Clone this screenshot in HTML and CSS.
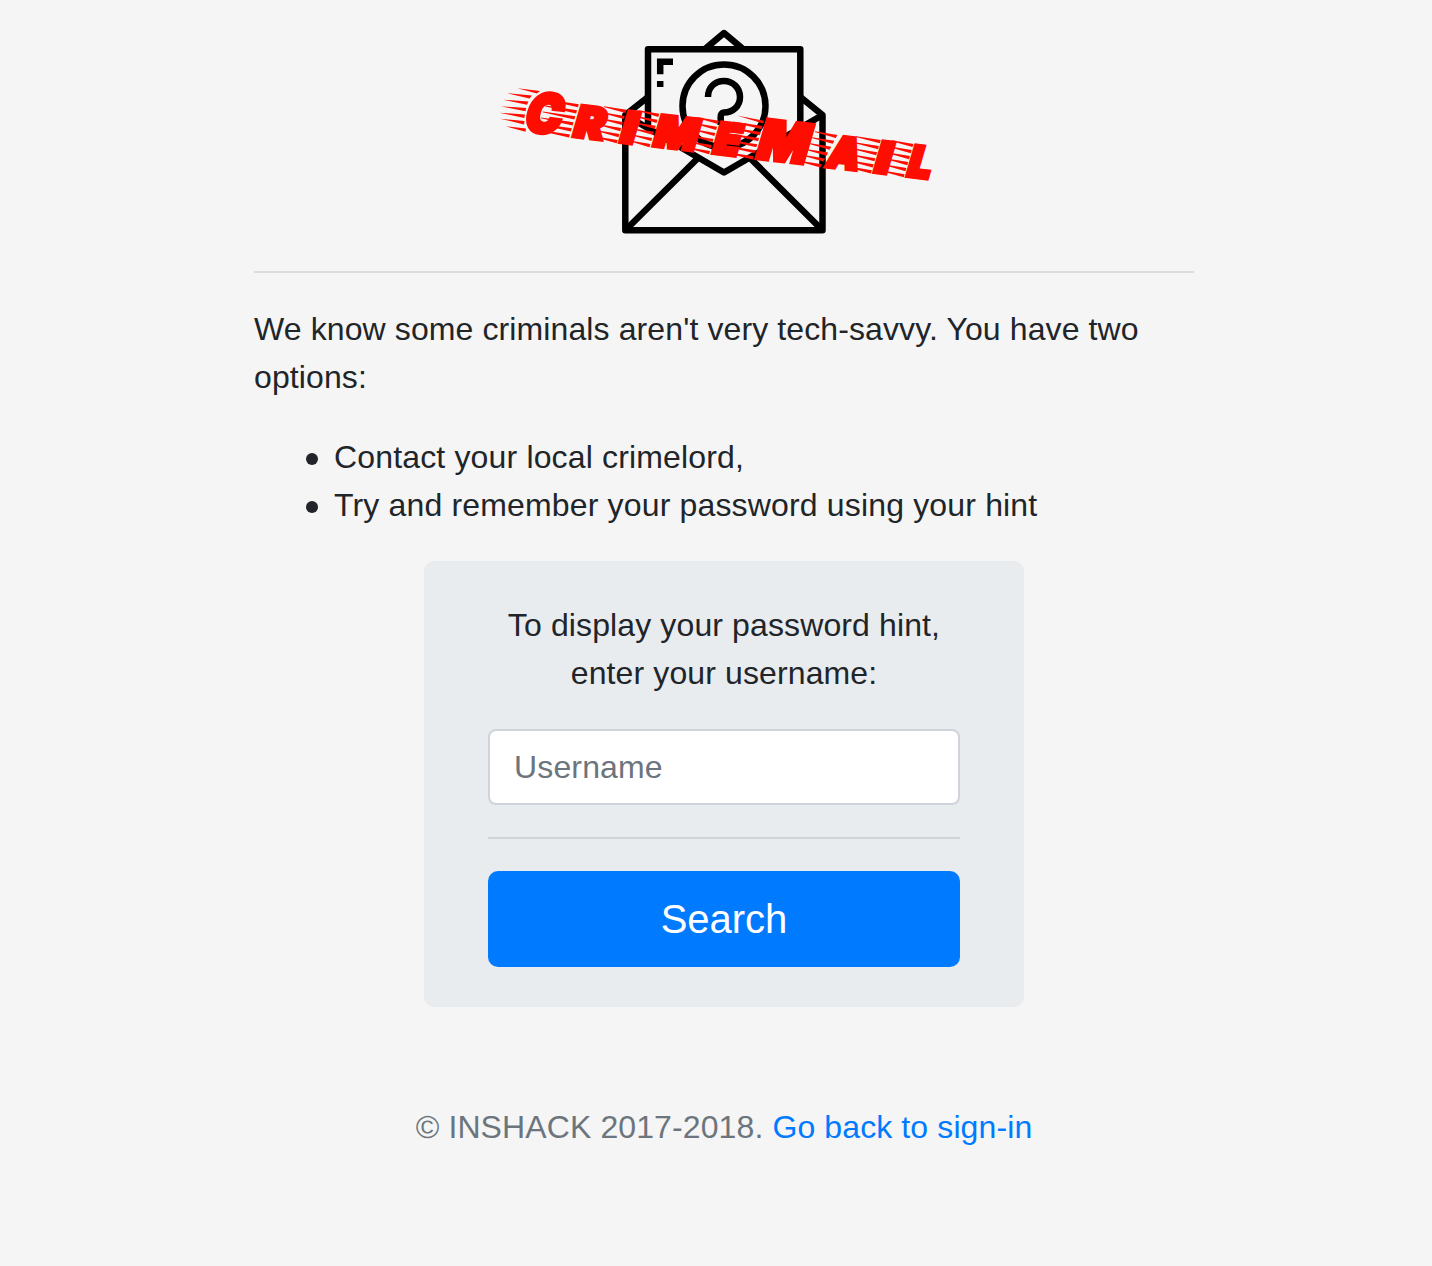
FILE: index.html
```html
<!DOCTYPE html>
<html lang="en">
<head>
<meta charset="utf-8">
<title>CrimeMail</title>
<link rel="stylesheet" href="styles.css">
</head>
<body>
<main class="container">
  <header class="brand">
    <svg class="logo" viewBox="464 24 520 216" role="img" aria-label="CrimeMail">
      <defs>
        <path id="streaks" d="M0-36V-35.200L20-31.700V-35ZM0-29.700V-28.900L20-25.400V-28.700ZM0-23.400V-22.600L20-19.100V-22.400ZM0-17.100V-16.300L20-12.800V-16.100ZM0-10.800V-10L20-6.500V-9.800ZM0-4.500V-3.700L20-.2V-3.500Z"/>
      </defs>
      <g class="envelope">
        <path d="M705 49L724 33L743 49"/>
        <path d="M648 125V49.3H800.3V125"/>
        <path d="M648 97L625.3 115V230.3H822.5V115L800.3 97"/>
        <path d="M625.3 115L724 172.5L822.5 115M625.3 230.3L697 159M822.5 230.3L751 159"/>
        <circle cx="724" cy="106" r="41.5"/>
        <path d="M708 97C708 87 715 81 724 81S740 88 740 97S733 112.500 724 112.500Q720.700 113 720.700 117V125"/>
        <path class="mark" d="M660.200 74.300V61.700H673M660.200 81V87"/>
      </g>
      <path class="trail" d="M517.300 88.300L540 91L537 93.400ZM507.300 93.300L532 95.500L529.500 98.500ZM503.300 99.700L528.500 101.600L527 104.800ZM501 106.300L526.300 108.100L525.500 111.300ZM499.300 112.700L525 114.600L524.300 117.900ZM500 118.700L524.500 121.100L524 124.400ZM505.700 126.300L526 128.600L525.500 131.800Z"/>
      <g class="wordmark" transform="matrix(.993 .118 -.28 .96 571 138)">
        <use href="#streaks" transform="translate(-35 0) scale(1.650 1)"/>
        <use href="#streaks" transform="translate(23 0) scale(1.150 1)"/>
        <use href="#streaks" transform="translate(58 0) scale(1.050 1)"/>
        <use href="#streaks" transform="translate(117 0) scale(1.100 1)"/>
        <use href="#streaks" transform="translate(153 0) scale(1.500 1)"/>
        <path d="M155-42.500L183-40.500V-37.500Z"/>
        <use href="#streaks" transform="translate(228 0) skewX(-12) scale(1.150 1)"/>
        <use href="#streaks" transform="translate(277 0) scale(1.250 1)"/>
        <use href="#streaks" transform="translate(313 0) scale(1.100 1)"/>
        <text y="-2"><tspan class="cap" x="-50" textLength="36" lengthAdjust="spacingAndGlyphs">C</tspan><tspan x="0" textLength="30" lengthAdjust="spacingAndGlyphs">R</tspan><tspan x="47" textLength="15" lengthAdjust="spacingAndGlyphs">I</tspan><tspan x="80.500" textLength="43" lengthAdjust="spacingAndGlyphs">M</tspan><tspan x="140.500" textLength="26" lengthAdjust="spacingAndGlyphs">E</tspan><tspan class="cap" x="184" textLength="51" lengthAdjust="spacingAndGlyphs">M</tspan><tspan x="255" textLength="32" lengthAdjust="spacingAndGlyphs">A</tspan><tspan x="303" textLength="15" lengthAdjust="spacingAndGlyphs">I</tspan><tspan x="336" textLength="23" lengthAdjust="spacingAndGlyphs">L</tspan></text>
      </g>
    </svg>
  </header>
  <hr class="rule">
  <p class="intro">We know some criminals aren't very tech-savvy. You have two options:</p>
  <ul class="options">
    <li>Contact your local crimelord,</li>
    <li>Try and remember your password using your hint</li>
  </ul>
  <form class="hint-form">
    <label class="prompt" for="username">To display your password hint, enter your username:</label>
    <input class="field" id="username" type="text" placeholder="Username">
    <hr class="divider">
    <button class="submit" type="button">Search</button>
  </form>
  <footer class="footer">© INSHACK 2017-2018. <a class="link" href="#">Go back to sign-in</a></footer>
</main>
</body>
</html>
```
FILE: styles.css
```css
*, *::before, *::after { box-sizing: border-box; }
body {
  margin: 0;
  padding: 24px 0 0 16px;
  background: #f5f5f5;
  color: #212529;
  font: 32px/48px "Liberation Sans", Arial, sans-serif;
  letter-spacing: .11px;
}
.container { width: 940px; margin: 0 auto; }
.brand { height: 216px; }
.logo { display: block; width: 520px; height: 216px; margin: 0 auto; overflow: visible; letter-spacing: 0; }
.envelope { fill: none; stroke: #000; stroke-width: 6.5; stroke-linejoin: round; }
.mark { stroke-linejoin: miter; }
.wordmark, .trail { fill: #ff0d00; }
.wordmark text {
  font: 900 43.5px Inter, sans-serif;
  stroke: #ff0d00;
  stroke-width: 4.4;
}
.wordmark .cap { font-size: 55px; }
.rule { height: 2px; margin: 31px 0 32px; border: 0; background: #dcdcdc; }
.intro { margin: 0 0 32px; }
.options { margin: 0 0 32px; padding-left: 52px; list-style: none; letter-spacing: .16px; }
.options li { display: flex; align-items: center; gap: 16px; }
.options li::before {
  content: "";
  width: 12px;
  height: 12px;
  margin-top: 3px;
  border-radius: 50%;
  background: currentColor;
}
.hint-form {
  display: flex;
  flex-direction: column;
  width: 600px;
  height: 446px;
  margin: 0 auto;
  padding: 40px 64px;
  border-radius: 10px;
  background: #e9ecef;
}
.prompt { margin-bottom: 32px; text-align: center; letter-spacing: .12px; }
.field {
  width: 100%;
  height: 76px;
  padding: 12px 24px;
  border: 2px solid #ced4da;
  border-radius: 8px;
  background: #fff;
  color: #495057;
  font: inherit;
  letter-spacing: .15px;
}
.field::placeholder { color: #6c757d; opacity: 1; }
.divider { width: 100%; height: 2px; margin: 32px 0; border: 0; background: #d0d4d8; }
.submit {
  width: 100%;
  height: 96px;
  padding: 0;
  border: 0;
  border-radius: 10px;
  background: #007bff;
  color: #fff;
  font: 40px/60px "Liberation Sans", Arial, sans-serif;
}
.footer { margin-top: 96px; padding-bottom: 112px; color: #6c757d; text-align: center; }
.link { color: #007bff; text-decoration: none; }
```
